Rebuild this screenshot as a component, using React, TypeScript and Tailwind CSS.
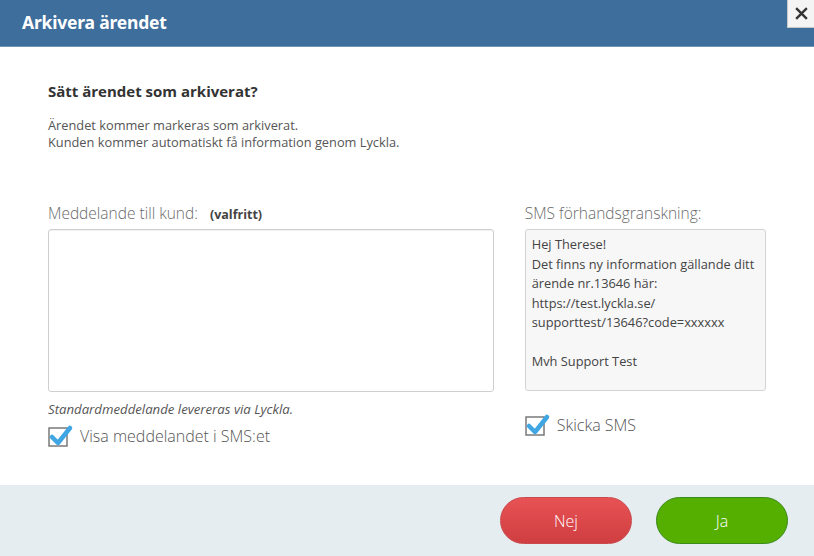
import React from "react";

function Check() {
  return (
    <svg width="26" height="24" viewBox="0 0 26 24" className="shrink-0">
      <rect x="1" y="4" width="18" height="18" fill="white" stroke="#7a7a7a" strokeWidth="1.5" />
      <path d="M4 13 L10 19 L22 4" fill="none" stroke="#3fa6e3" strokeWidth="4.5" strokeLinecap="round" strokeLinejoin="round" />
    </svg>
  );
}

export default function App() {
  const font = { fontFamily: '"Open Sans", "Noto Sans", sans-serif' };
  return (
    <div className="w-[814px] h-[556px] bg-white flex flex-col overflow-hidden" style={font}>
      <div className="h-[47px] bg-[#3d6e9c] border-b border-[#6f95b8] flex items-center justify-between relative">
        <div className="pl-[22px] text-white text-[17.5px] font-bold tracking-[-0.2px] pb-[1px]" style={{ fontFamily: '"Noto Sans", sans-serif' }}>
          Arkivera ärendet
        </div>
        <div className="absolute right-0 top-0 w-[27px] h-[28px] bg-[#f4f4f4] border-l border-b border-[#c8c8c8] flex items-center justify-center">
          <svg width="15" height="15" viewBox="0 0 14 14">
            <path d="M2 2 L12 12 M12 2 L2 12" stroke="#333" strokeWidth="2.2" />
          </svg>
        </div>
      </div>

      <div className="flex-1 px-[48px] pt-[34px]">
        <div className="text-[15px] font-bold text-[#333] leading-[20px]">Sätt ärendet som arkiverat?</div>
        <div className="mt-[16px] text-[12.8px] text-[#555] leading-[17px]">
          <div>Ärendet kommer markeras som arkiverat.</div>
          <div>Kunden kommer automatiskt få information genom Lyckla.</div>
        </div>

        <div className="flex mt-[51px]">
          <div className="w-[447px]">
            <div className="flex items-baseline h-[20px] text-[#6a6a6a]">
              <span className="text-[15.5px] font-light">Meddelande till kund:</span>
              <span className="ml-[12px] text-[12.5px] font-bold text-[#444]">(valfritt)</span>
            </div>
            <div className="mt-[7px] h-[163px] border border-[#cfcfcf] rounded-[3px] bg-white shadow-[inset_0_1px_1px_rgba(0,0,0,0.06)]" />
            <div className="mt-[8px] text-[13.2px] italic text-[#555] leading-[18px]">Standardmeddelande levereras via Lyckla.</div>
            <div className="mt-[6px] flex items-center gap-[6px]">
              <Check />
              <span className="text-[16px] text-[#555] font-light">Visa meddelandet i SMS:et</span>
            </div>
          </div>
          <div className="ml-[31px] w-[242px]">
            <div className="h-[20px] text-[15.5px] text-[#6a6a6a] font-light">SMS förhandsgranskning:</div>
            <div className="mt-[7px] h-[162px] border border-[#d3d3d3] rounded-[3px] bg-[#f7f7f7] px-[6px] pt-[5px] text-[12.8px] leading-[19.5px] text-[#444] whitespace-nowrap">
              <div>Hej Therese!</div>
              <div>Det finns ny information gällande ditt</div>
              <div>ärende nr.13646 här:</div>
              <div>https://test.lyckla.se/</div>
              <div>supporttest/13646?code=xxxxxx</div>
              <div className="h-[19.5px]" />
              <div>Mvh Support Test</div>
            </div>
            <div className="mt-[22px] flex items-center gap-[6px]">
              <Check />
              <span className="text-[16px] text-[#555] font-light">Skicka SMS</span>
            </div>
          </div>
        </div>
      </div>

      <div className="h-[71px] bg-[#e6edf1] flex items-start justify-end pt-[12px] pr-[26px] gap-[24px]">
        <button className="w-[132px] h-[47px] rounded-full bg-gradient-to-b from-[#e85254] to-[#cf3e41] border border-[#c94a4c] text-white text-[16px] font-light">
          Nej
        </button>
        <button className="w-[132px] h-[47px] rounded-full bg-[#55af00] border border-[#3b8a1e] text-white text-[16px] font-light">
          Ja
        </button>
      </div>
    </div>
  );
}
